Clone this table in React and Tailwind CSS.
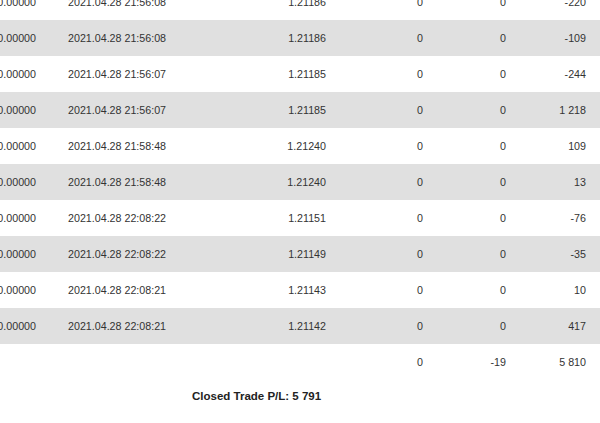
const ROWS = [
  ['0.00000', '2021.04.28 21:56:08', '1.21186', '0', '0', '-220'],
  ['0.00000', '2021.04.28 21:56:08', '1.21186', '0', '0', '-109'],
  ['0.00000', '2021.04.28 21:56:07', '1.21185', '0', '0', '-244'],
  ['0.00000', '2021.04.28 21:56:07', '1.21185', '0', '0', '1 218'],
  ['0.00000', '2021.04.28 21:58:48', '1.21240', '0', '0', '109'],
  ['0.00000', '2021.04.28 21:58:48', '1.21240', '0', '0', '13'],
  ['0.00000', '2021.04.28 22:08:22', '1.21151', '0', '0', '-76'],
  ['0.00000', '2021.04.28 22:08:22', '1.21149', '0', '0', '-35'],
  ['0.00000', '2021.04.28 22:08:21', '1.21143', '0', '0', '10'],
  ['0.00000', '2021.04.28 22:08:21', '1.21142', '0', '0', '417'],
]

function Row({ cells, shaded }) {
  return (
    <div className={`flex h-[36px] items-center -ml-[20px] w-[640px] ${shaded ? 'bg-[#e0e0e0]' : 'bg-white'}`}>
      <div className="w-[56px] shrink-0 text-right whitespace-nowrap">{cells[0]}</div>
      <div className="w-[164px] shrink-0 pl-[32px] whitespace-nowrap">{cells[1]}</div>
      <div className="w-[126px] shrink-0 text-right">{cells[2]}</div>
      <div className="w-[97px] shrink-0 text-right">{cells[3]}</div>
      <div className="w-[83px] shrink-0 text-right">{cells[4]}</div>
      <div className="w-[80px] shrink-0 text-right whitespace-nowrap">{cells[5]}</div>
    </div>
  )
}

export default function App() {
  return (
    <div
      className="w-[600px] h-[423px] overflow-hidden bg-white text-[#333] text-[10.7px]"
      style={{ fontFamily: '"Liberation Sans", Arial, sans-serif' }}
    >
      <div className="-mt-[16px]">
        {ROWS.map((r, i) => (
          <Row key={i} cells={r} shaded={i % 2 === 1} />
        ))}
        <Row cells={['', '', '', '0', '-19', '5 810']} shaded={false} />
        <div className="h-[34px] flex items-center pl-[192px] font-bold text-[11.5px] text-[#222]">
          Closed Trade P/L: 5 791
        </div>
      </div>
    </div>
  )
}
